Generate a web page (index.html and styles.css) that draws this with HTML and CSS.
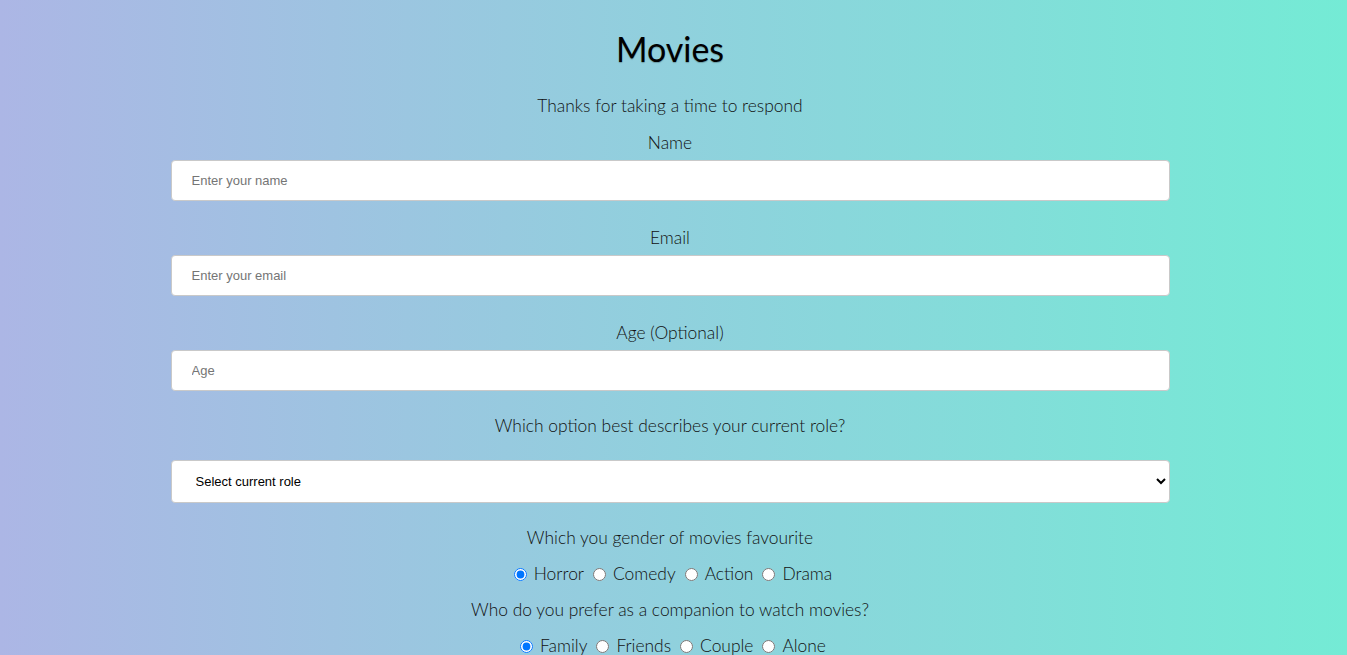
FILE: index.html
```html
<!DOCTYPE html>
<html lang="en">
<head>
<meta charset="utf-8">
<title>Movies</title>
<link rel="stylesheet" href="styles.css">
</head>
<body>
<main class="page">
  <h1 class="title">Movies</h1>
  <p class="intro">Thanks for taking a time to respond</p>
  <form class="survey">
    <div class="group">
      <label class="label" for="name">Name</label>
      <input class="field" id="name" type="text" placeholder="Enter your name">
    </div>
    <div class="group">
      <label class="label" for="email">Email</label>
      <input class="field" id="email" type="email" placeholder="Enter your email">
    </div>
    <div class="group">
      <label class="label" for="age">Age (Optional)</label>
      <input class="field" id="age" type="number" placeholder="Age">
    </div>
    <div class="group group-select">
      <label class="label" for="role">Which option best describes your current role?</label>
      <select class="field select" id="role">
        <option>Select current role</option>
        <option>Student</option>
        <option>Full Time Job</option>
      </select>
    </div>
    <div class="group group-radio">
      <p class="label">Which you gender of movies favourite</p>
      <div class="radios">
        <label class="opt"><input type="radio" name="genre" checked>Horror</label>
        <label class="opt"><input type="radio" name="genre">Comedy</label>
        <label class="opt"><input type="radio" name="genre">Action</label>
        <label class="opt"><input type="radio" name="genre">Drama</label>
      </div>
    </div>
    <div class="group group-radio2">
      <p class="label">Who do you prefer as a companion to watch movies?</p>
      <div class="radios">
        <label class="opt"><input type="radio" name="comp" checked>Family</label>
        <label class="opt"><input type="radio" name="comp">Friends</label>
        <label class="opt"><input type="radio" name="comp">Couple</label>
        <label class="opt"><input type="radio" name="comp">Alone</label>
      </div>
    </div>
  </form>
</main>
</body>
</html>
```
FILE: styles.css
```css
* { box-sizing: border-box; }
html, body { margin: 0; padding: 0; }
body {
  min-height: 100vh;
  background: linear-gradient(to right, #acb6e5, #74ebd5);
  font-family: "Lato", "Open Sans", sans-serif;
  font-weight: 300;
  color: #111;
  padding-right: 7px;
}
.page {
  width: 999px;
  margin: 0 auto;
  text-align: center;
  padding-top: 27px;
}
.title {
  margin: 0;
  font-size: 34px;
  font-weight: 400;
  line-height: 44px;
  color: #000;
  text-shadow: 0 1px 1px rgba(0, 0, 0, 0.25);
}
.intro {
  margin: 25px 0 0;
  font-size: 17.4px;
  line-height: 20px;
}
.survey { display: flex; flex-direction: column; }
.group { display: flex; flex-direction: column; align-items: stretch; }
.label {
  display: block;
  margin: 0;
  font-size: 17.4px;
  line-height: 20px;
}
.survey .group:first-child .label { margin-top: 17px; }
.group + .group .label { margin-top: 27px; }
.field {
  margin-top: 7px;
  height: 41px;
  width: 100%;
  border: 1px solid #c9c9c9;
  border-radius: 4px;
  background: #fff;
  padding: 0 20px;
  font-family: "Liberation Sans", Arial, sans-serif;
  font-size: 13px;
  color: #000;
}
.field::placeholder { color: #757575; }
.group-select .label { margin-top: 25px !important; }
.select {
  margin-top: 24px;
  height: 43px;
  padding: 0 20px;
}
.group-radio .label { margin-top: 25px !important; }
.group-radio2 .label { margin-top: 16px !important; }
.radios {
  margin-top: 16px;
  padding-left: 6px;
  display: flex;
  justify-content: center;
  gap: 9px;
  font-size: 17.4px;
  line-height: 20px;
}
.opt { display: inline-flex; align-items: center; }
.opt input { margin: 0 7px 0 0; width: 13px; height: 13px; }
```
